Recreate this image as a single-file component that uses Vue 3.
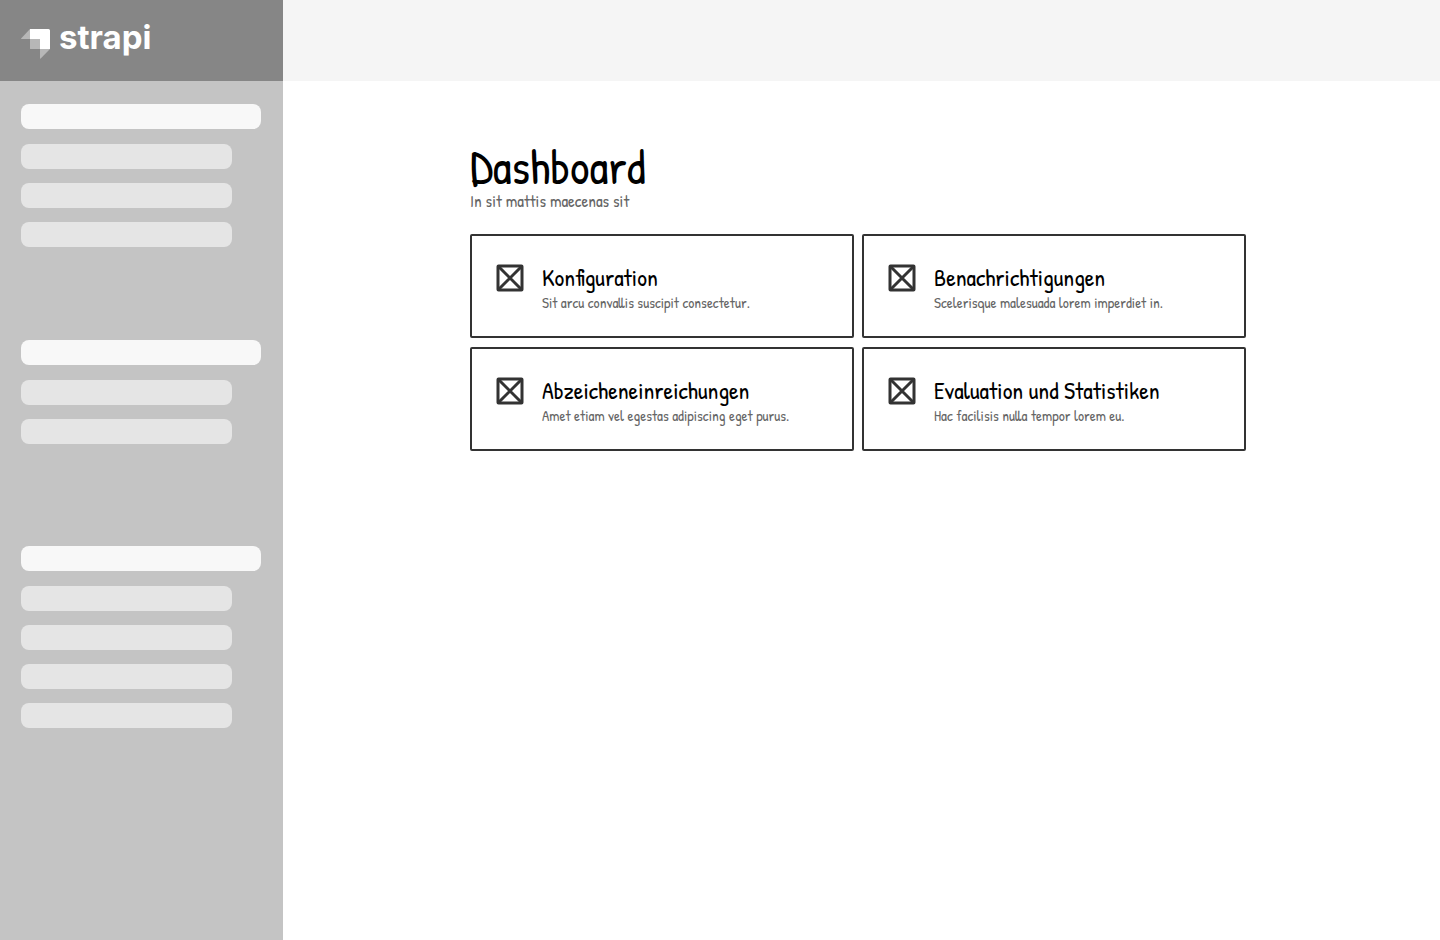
<script setup>
const navGroups = [
  { id: 'first', items: 3 },
  { id: 'second', items: 2 },
  { id: 'third', items: 4 },
]

const cards = [
  { title: 'Konfiguration', text: 'Sit arcu convallis suscipit consectetur.' },
  { title: 'Benachrichtigungen', text: 'Scelerisque malesuada lorem imperdiet in.' },
  { title: 'Abzeicheneinreichungen', text: 'Amet etiam vel egestas adipiscing eget purus.' },
  { title: 'Evaluation und Statistiken', text: 'Hac facilisis nulla tempor lorem eu.' },
]
</script>

<template>
  <div class="layout">
    <aside class="sidebar">
      <div class="brand">
        <svg class="brand-mark" viewBox="0 0 29 30" aria-hidden="true">
          <path d="M9 0H27.5Q29 0 29 1.5V20H19V10H9Z" fill="#fff" />
          <path d="M9 10H19V20H9.5Q9 20 9 19.5Z" fill="#b7b7b7" />
          <path d="M9 0V10H0.5Q-.2 10 .3 9.3Z" fill="#b7b7b7" />
          <path d="M19 20H29L19.7 29.4Q19 30 19 29.1Z" fill="#b7b7b7" />
        </svg>
        <span class="brand-name">strapi</span>
      </div>
      <nav class="nav">
        <div v-for="group in navGroups" :key="group.id" class="nav-group" :class="group.id">
          <div class="bar bar-head"></div>
          <div v-for="n in group.items" :key="n" class="bar"></div>
        </div>
      </nav>
    </aside>
    <div class="page">
      <header class="topbar"></header>
      <main class="content">
        <h1 class="title">Dashboard</h1>
        <p class="subtitle">In sit mattis maecenas sit</p>
        <div class="cards">
          <section v-for="card in cards" :key="card.title" class="card">
            <svg class="card-icon" viewBox="0 0 28 28" aria-hidden="true">
              <rect x="2" y="2" width="24" height="24" rx="0.5" />
              <path d="M2.5 2.5L25.5 25.5M25.5 2.5L2.5 25.5" />
            </svg>
            <div class="card-body">
              <h2 class="card-title">{{ card.title }}</h2>
              <p class="card-text">{{ card.text }}</p>
            </div>
          </section>
        </div>
      </main>
    </div>
  </div>
</template>

<style>
body {
  margin: 0;
  background: #fff;
}
</style>

<style scoped>
.layout {
  display: flex;
  min-height: 100vh;
  font-family: "Patrick Hand", "Lato", sans-serif;
  color: #000;
}
.sidebar {
  flex: 0 0 283px;
  background: #c4c4c4;
}
.brand {
  display: flex;
  align-items: center;
  gap: 9px;
  box-sizing: border-box;
  height: 81px;
  padding: 0 21px;
  background: #868686;
}
.brand-mark {
  width: 29px;
  height: 30px;
  margin-top: 6px;
}
.brand-name {
  padding-bottom: 8px;
  color: #fff;
  font-family: "Inter", sans-serif;
  font-size: 33px;
  line-height: 40px;
  font-weight: 700;
}
.nav {
  padding: 23px 22px 23px 21px;
}
.nav-group {
  display: flex;
  flex-direction: column;
  gap: 14px;
}
.nav-group.second {
  margin-top: 93px;
}
.nav-group.third {
  margin-top: 102px;
}
.bar {
  height: 25px;
  margin-right: 29px;
  border-radius: 8px;
  background: #e5e5e5;
}
.bar-head {
  margin-right: 0;
  margin-bottom: 1px;
  background: #f8f8f8;
}
.page {
  flex: 1;
  min-width: 0;
}
.topbar {
  height: 81px;
  background: #f5f5f5;
}
.content {
  padding: 60px 194px 60px 187px;
}
.title {
  margin: 0;
  font-size: 48px;
  line-height: 52px;
  font-weight: 400;
}
.subtitle {
  margin: 0;
  color: #666;
  font-size: 17px;
  line-height: 16px;
}
.cards {
  display: grid;
  grid-template-columns: repeat(2, minmax(0, 1fr));
  gap: 9px 8px;
  margin-top: 25px;
}
.card {
  display: flex;
  gap: 18px;
  padding: 25px 24px 23px;
  border: 2px solid #333;
  border-radius: 2px;
}
.card-icon {
  flex: none;
  width: 28px;
  height: 28px;
  margin-top: 3px;
  fill: none;
  stroke: #333;
  stroke-width: 3;
  stroke-linejoin: round;
}
.card-title {
  margin: 0;
  font-size: 24px;
  line-height: 32px;
  font-weight: 400;
}
.card-text {
  margin: 0;
  color: #666;
  font-size: 15px;
  line-height: 20px;
}
</style>
